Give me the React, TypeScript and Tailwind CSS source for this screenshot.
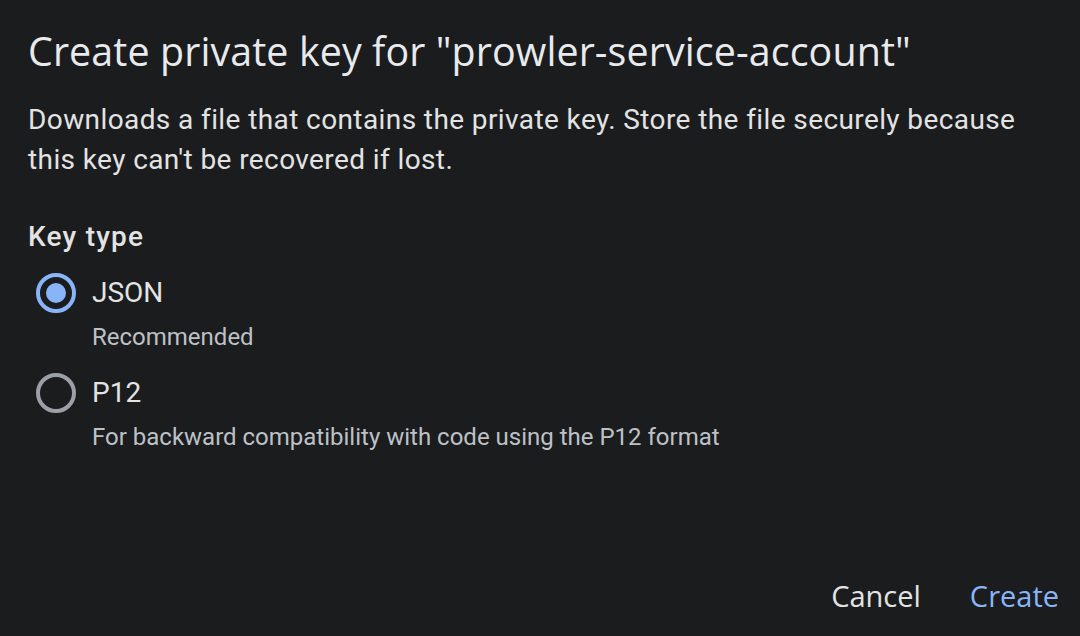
import React from 'react';

const Radio = ({ checked }: { checked: boolean }) => (
  <div
    className={`w-[40px] h-[40px] rounded-full border-[4px] flex items-center justify-center flex-shrink-0 ${
      checked ? 'border-[#8ab4f8]' : 'border-[#9aa0a6]'
    }`}
  >
    {checked && <div className="w-[20px] h-[20px] rounded-full bg-[#8ab4f8]" />}
  </div>
);

const App: React.FC = () => {
  const options = [
    { label: 'JSON', hint: 'Recommended', checked: true },
    { label: 'P12', hint: 'For backward compatibility with code using the P12 format', checked: false },
  ];

  return (
    <div className="w-[1080px] h-[636px] bg-[#1b1c1e] text-[#e3e3e3] flex flex-col" style={{ fontFamily: 'Roboto, sans-serif' }}>
      <div className="px-[28px] pt-[26px] flex-1">
        <h1 className="text-[39.4px] leading-[50px] text-[#e8eaed] whitespace-nowrap tracking-[0.1px]" style={{ fontFamily: '"Open Sans", sans-serif' }}>
          Create private key for "prowler-service-account"
        </h1>
        <p className="mt-[24px] text-[28px] leading-[40px] text-[#e3e3e3] tracking-[0.4px] pr-[20px]">
          Downloads a file that contains the private key. Store the file securely because this key can't be recovered if lost.
        </p>
        <h2 className="mt-[37px] text-[28px] leading-[40px] font-medium tracking-[1.2px] text-[#e3e3e3]">Key type</h2>
        <div className="mt-[16px] flex flex-col gap-[12px]">
          {options.map(o => (
            <div key={o.label} className="flex flex-col">
              <div className="flex items-center pl-[8px] gap-[16px]">
                <Radio checked={o.checked} />
                <span className="text-[28px] leading-[40px] text-[#e3e3e3]">{o.label}</span>
              </div>
              <span className="pl-[64px] text-[24px] leading-[48px] text-[#bdc1c6]">{o.hint}</span>
            </div>
          ))}
        </div>
      </div>
      <div className="flex justify-end items-center gap-[49px] pr-[21px] pb-[19px] text-[29px] font-medium" style={{ fontFamily: '"Open Sans", sans-serif' }}>
        <button className="text-[#e3e3e3]">Cancel</button>
        <button className="text-[#8ab4f8]">Create</button>
      </div>
    </div>
  );
};

export default App;
